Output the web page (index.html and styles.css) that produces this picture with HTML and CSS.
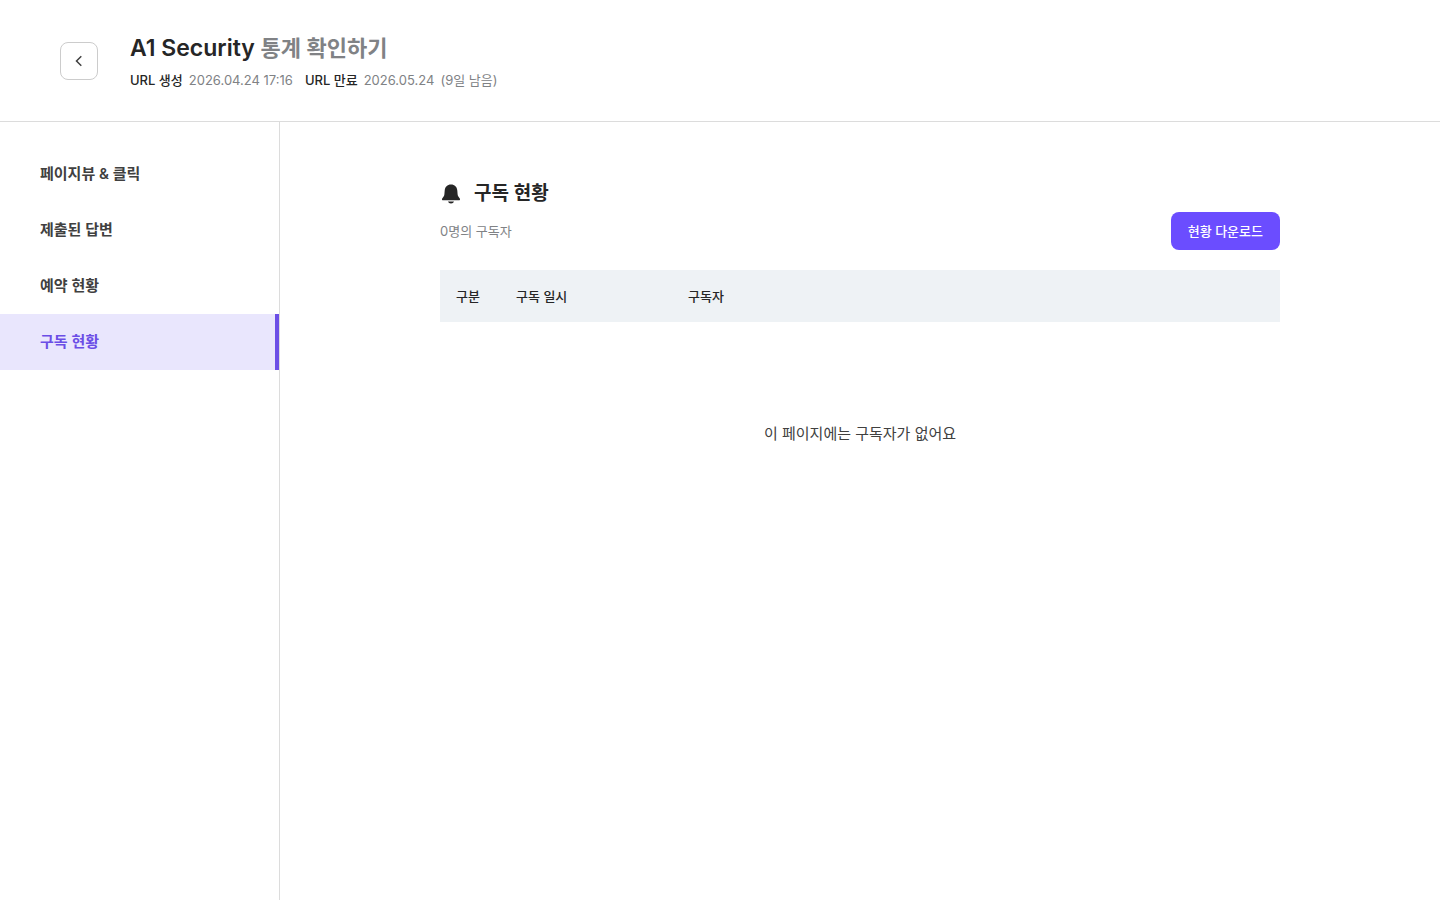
FILE: index.html
```html
<!DOCTYPE html>
<html lang="ko">
<head>
  <meta charset="UTF-8" />
  <meta name="viewport" content="width=device-width, initial-scale=1.0"/>
  <title>A1 Security 통계 확인하기</title>
  <link rel="stylesheet" href="styles.css">
</head>
<body>

  <header class="header">
    <button type="button" class="back-btn" aria-label="뒤로">
      <svg width="16" height="16" viewBox="0 0 16 16" fill="none" stroke="#404040" stroke-width="1.5">
        <path d="M10.3 3.2L5.5 8l4.8 4.8" />
      </svg>
    </button>
    <div class="header-text">
      <h1>A1 Security <span>통계 확인하기</span></h1>
      <dl class="meta">
        <dt>URL 생성</dt>
        <dd>2026.04.24 17:16</dd>
        <dt>URL 만료</dt>
        <dd>2026.05.24</dd>
        <dd>(9일 남음)</dd>
      </dl>
    </div>
  </header>

  <div class="layout">
    <nav class="sidebar">
      <a href="#pageview">페이지뷰 &amp; 클릭</a>
      <a href="#answers">제출된 답변</a>
      <a href="#reservation">예약 현황</a>
      <a href="#subscribe" class="active" aria-current="page">구독 현황</a>
    </nav>

    <main class="content">
      <section class="panel">
        <h2>
          <svg width="22" height="22" viewBox="0 0 22 22" fill="#262626">
            <path d="M11 1.500c-3.700 0-6 2.500-6.300 6l-.3 3.800c-.1 1-.4 1.800-1.100 2.600l-1.100 1.500c-.6.9-.1 1.900.9 1.900h15.800c1 0 1.500-1 .9-1.900l-1.100-1.500c-.7-.8-1-1.600-1.100-2.600l-.3-3.800c-.3-3.500-2.600-6-6.300-6z" />
            <path d="M8 18.500h6c-.4 1.200-1.500 1.900-3 1.900s-2.600-.7-3-1.900z" />
          </svg>
          구독 현황
        </h2>
        <div class="panel-bar">
          <p>0명의 구독자</p>
          <button type="button" class="download-btn">현황 다운로드</button>
        </div>
        <table class="table">
          <thead>
            <tr>
              <th class="col-type">구분</th>
              <th class="col-date">구독 일시</th>
              <th>구독자</th>
            </tr>
          </thead>
          <tbody>
            <tr>
              <td class="empty" colspan="3">이 페이지에는 구독자가 없어요</td>
            </tr>
          </tbody>
        </table>
      </section>
    </main>
  </div>

</body>
</html>
```
FILE: styles.css
```css
* {
  box-sizing: border-box;
}

body {
  margin: 0;
  min-height: 100vh;
  display: flex;
  flex-direction: column;
  font-family: Inter, 'Noto Sans CJK KR', sans-serif;
  font-size: 13px;
  line-height: 20px;
  background: #fff;
  color: #262626;
}

h1, h2, p, dl, dd {
  margin: 0;
}

button {
  padding: 0;
  font-family: inherit;
  cursor: pointer;
}

.header {
  display: flex;
  align-items: center;
  gap: 32px;
  padding: 31px 60px;
  border-bottom: 1px solid #dcdcdc;
}

.back-btn {
  display: flex;
  align-items: center;
  justify-content: center;
  width: 38px;
  height: 38px;
  border: 1px solid #ccc;
  border-radius: 8px;
  background: #fff;
}

h1 {
  font-size: 23px;
  font-weight: 600;
  line-height: 34px;
}

h1 span {
  font-size: 22px;
  color: #808285;
}

.meta {
  display: flex;
  gap: 6px;
  margin-top: 5px;
}

.meta dt {
  font-weight: 500;
}

.meta dd {
  color: #808285;
}

.meta dd + dt {
  margin-left: 6px;
}

.layout {
  flex: 1;
  display: flex;
}

.sidebar {
  width: 280px;
  padding-top: 24px;
  border-right: 1px solid #dcdcdc;
}

.sidebar a {
  display: block;
  padding: 16px 40px;
  font-size: 15px;
  font-weight: 600;
  line-height: 24px;
  color: #404040;
  text-decoration: none;
}

.sidebar .active {
  border-right: 4px solid #6b4ee6;
  background: #e9e6fd;
  color: #6b4ee6;
}

.content {
  flex: 1;
  padding: 56px 40px;
}

.panel {
  max-width: 840px;
  margin: 0 auto;
}

h2 {
  display: flex;
  align-items: center;
  gap: 12px;
  font-size: 19px;
  font-weight: 600;
  line-height: 32px;
}

.panel-bar {
  display: flex;
  align-items: center;
  justify-content: space-between;
  margin: 2px 0 20px;
  color: #808285;
}

.download-btn {
  height: 38px;
  padding: 0 17px;
  border: none;
  border-radius: 8px;
  background: #6b4dff;
  color: #fff;
  font-size: 13px;
  font-weight: 500;
  line-height: 20px;
}

.table {
  width: 100%;
  border-collapse: collapse;
}

.table th {
  padding: 16px;
  background: #eef2f5;
  font-weight: 500;
  text-align: left;
}

.table .col-type {
  width: 60px;
}

.table .col-date {
  width: 172px;
}

.table .empty {
  padding: 100px 16px;
  font-size: 15px;
  line-height: 24px;
  color: #404040;
  text-align: center;
}
```
